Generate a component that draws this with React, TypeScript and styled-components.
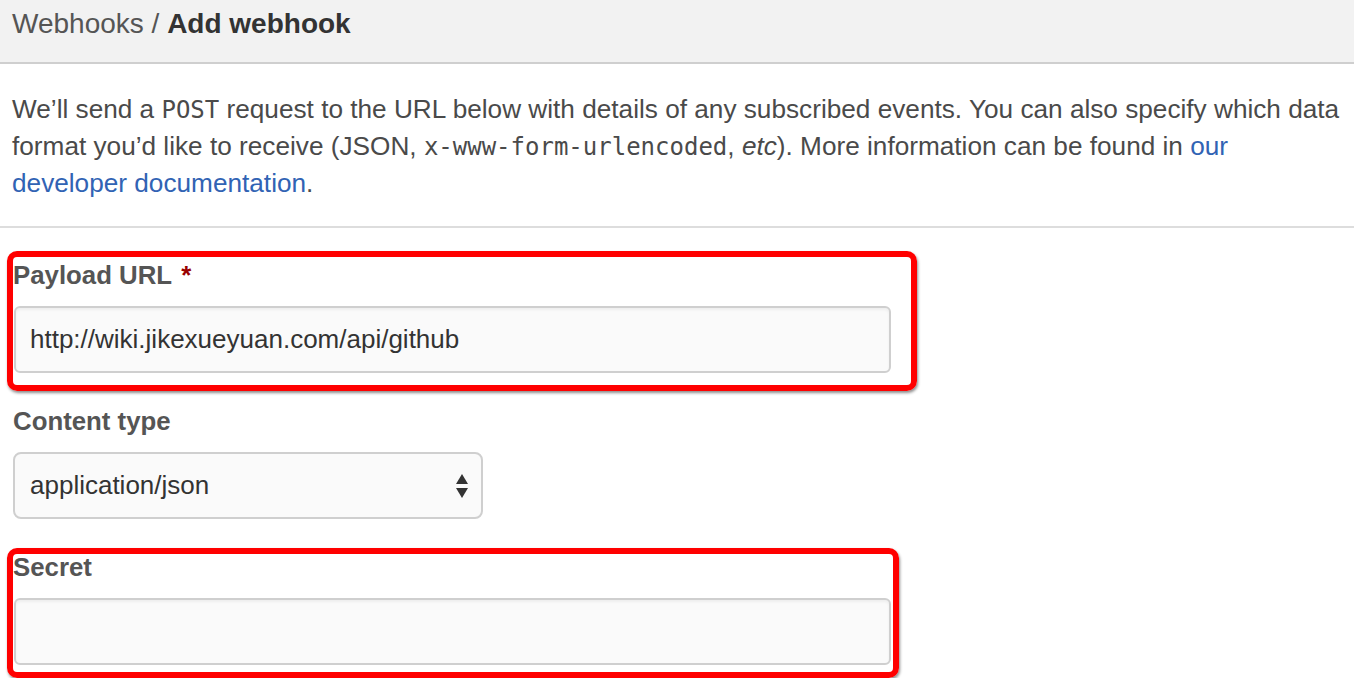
import React from "react";
import styled, { createGlobalStyle } from "styled-components";

const Global = createGlobalStyle`
  html, body { margin: 0; padding: 0; background: #fff; }
  body { font-family: "Liberation Sans", Arial, sans-serif; color: #333; overflow: hidden; }
  * { box-sizing: border-box; }
`;

const Page = styled.div`
  width: 1354px;
  height: 678px;
  overflow: hidden;
`;

const Header = styled.div`
  height: 64px;
  background: #f2f2f2;
  border-bottom: 2px solid #cfcfcf;
  padding: 6px 0 0 12px;
`;

const Title = styled.h1`
  margin: 0;
  font-size: 28px;
  line-height: 36px;
  font-weight: normal;
  color: #555;
`;

const Strong = styled.strong`
  color: #333;
  font-weight: bold;
`;

const Intro = styled.p`
  margin: 0;
  padding: 27px 10px 25px 12px;
  font-size: 26.2px;
  line-height: 36px;
  color: #4a4a4a;
  border-bottom: 2px solid #ddd;
`;

const Code = styled.code`
  font-family: "DejaVu Sans Mono", "Liberation Mono", monospace;
  font-size: 24px;
`;

const Link = styled.a`
  color: #3163b4;
  text-decoration: none;
`;

const Form = styled.div`
  padding: 29px 0 0 13px;
  display: flex;
  flex-direction: column;
  gap: 30px;
`;

const Group = styled.div`
  position: relative;
  display: flex;
  flex-direction: column;
  gap: 13px;
`;

const Label = styled.label`
  font-size: 25.8px;
  line-height: 36px;
  font-weight: bold;
  color: #555;
`;

const Req = styled.span`
  color: #990000;
  margin-left: 9px;
`;

const Field = styled.div<{ $w: number }>`
  width: ${(p) => p.$w}px;
  height: 67px;
  margin-left: 1px;
  background: #fafafa;
  border: 2px solid #cfcfcf;
  border-radius: 6px;
  box-shadow: inset 0 2px 3px rgba(0, 0, 0, 0.05);
  display: flex;
  align-items: center;
  padding: 0 14px;
  font-size: 26px;
  color: #333;
`;

const Select = styled(Field)`
  margin-left: 0;
  border-radius: 8px;
  justify-content: space-between;
  box-shadow: none;
  padding: 0 12px 0 15px;
`;

const Annot = styled.div<{ $top: number; $w: number; $h: number }>`
  position: absolute;
  left: -6px;
  top: ${(p) => p.$top}px;
  width: ${(p) => p.$w}px;
  height: ${(p) => p.$h}px;
  border: 6px solid #ff0000;
  border-radius: 10px;
  box-shadow: 1px 2px 3px rgba(0, 0, 0, 0.45);
  pointer-events: none;
`;

const Arrows = () => (
  <svg width="14" height="26" viewBox="0 0 14 26">
    <path d="M7 1 L13 11 L1 11 Z" fill="#333" />
    <path d="M1 15 L13 15 L7 25 Z" fill="#333" />
  </svg>
);

export default function App() {
  return (
    <Page>
      <Global />
      <Header>
        <Title>
          Webhooks / <Strong>Add webhook</Strong>
        </Title>
      </Header>
      <Intro>
        We’ll send a <Code>POST</Code> request to the URL below with details of any subscribed events. You can also specify which data format you’d like to receive (JSON, <Code>x-www-form-urlencoded</Code>, <em>etc</em>). More information can be found in <Link href="#">our developer documentation</Link>.
      </Intro>
      <Form>
        <Group>
          <Label>
            Payload URL<Req>*</Req>
          </Label>
          <Field $w={877}>http://wiki.jikexueyuan.com/api/github</Field>
          <Annot $top={-6} $w={910} $h={140} />
        </Group>
        <Group>
          <Label>Content type</Label>
          <Select $w={470}>
            <span>application/json</span>
            <Arrows />
          </Select>
        </Group>
        <Group>
          <Label>Secret</Label>
          <Field $w={877} />
          <Annot $top={-1} $w={892} $h={130} />
        </Group>
      </Form>
    </Page>
  );
}
